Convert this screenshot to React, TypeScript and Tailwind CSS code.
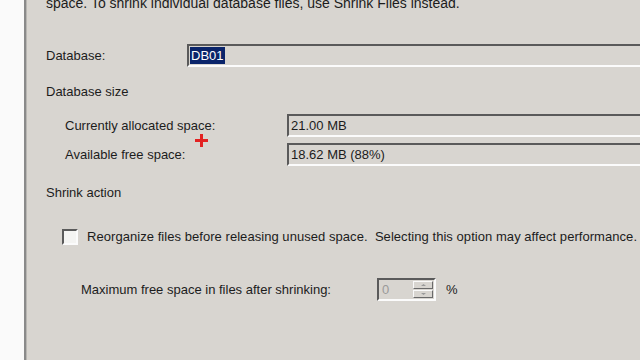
import React from "react";

const sunken =
  "border-t-2 border-l-2 border-b-2 border-r-2 border-t-[#5a5a5a] border-l-[#5a5a5a] border-b-[#fbfbfb] border-r-[#fbfbfb]";

function Field({ children, className = "" }: { children?: React.ReactNode; className?: string }) {
  return (
    <div className={`${sunken} bg-[#d8d5d0] h-[23px] flex items-center pl-[1px] ${className}`}>
      {children}
    </div>
  );
}

function Spinner() {
  return (
    <div className={`${sunken} w-[59px] h-[23px] flex bg-[#d8d5d0]`}>
      <div className="flex-1 pl-[3px] text-[#9a9a9a] leading-[19px]">0</div>
      <div className="w-[21px] flex flex-col gap-[1px] py-[1px] pr-[1px]">
        <div className="flex-1 bg-[#d8d5d0] border-t border-l border-t-[#fafafa] border-l-[#fafafa] border-b border-r border-b-[#6a6a6a] border-r-[#6a6a6a] flex items-center justify-center">
          <svg width="7" height="4" viewBox="0 0 7 4">
            <path d="M1 3 L3.5 1 L6 3 Z" fill="#9a9a9a" />
          </svg>
        </div>
        <div className="flex-1 bg-[#d8d5d0] border-t border-l border-t-[#fafafa] border-l-[#fafafa] border-b border-r border-b-[#6a6a6a] border-r-[#6a6a6a] flex items-center justify-center">
          <svg width="7" height="4" viewBox="0 0 7 4">
            <path d="M1 1 L3.5 3 L6 1 Z" fill="#9a9a9a" />
          </svg>
        </div>
      </div>
    </div>
  );
}

export default function App() {
  return (
    <div
      className="relative w-[640px] h-[360px] overflow-hidden flex bg-[#d8d5d0] text-[13px] text-[#1c1c1c]"
      style={{ fontFamily: '"Liberation Sans", Arial, sans-serif' }}
    >
      <div className="w-[24px] bg-[#fafafa] shrink-0" />
      <div className="w-[3px] bg-[#8a8a8a] border-r border-r-[#b8b6b2] shrink-0" />
      <div className="flex-1 flex flex-col pl-[19px] whitespace-nowrap">
        <div className="h-[15px] leading-[15px] mt-[-4px] text-[14px]">
          space. To shrink individual database files, use Shrink Files instead.
        </div>

        <div className="h-[23px] mt-[33px] flex items-center">
          <span className="w-[141px]">Database:</span>
          <Field className="flex-1 mr-[-20px]">
            <span className="bg-[#0a246a] text-white px-[1px] leading-[17px]">DB01</span>
          </Field>
        </div>

        <div className="h-[15px] leading-[15px] mt-[17px]">Database size</div>

        <div className="h-[23px] mt-[15px] flex items-center pl-[19px]">
          <span className="w-[222px]">Currently allocated space:</span>
          <Field className="flex-1 mr-[-20px]">
            <span className="pl-[1px]">21.00 MB</span>
          </Field>
        </div>

        <div className="h-[23px] mt-[6px] flex items-center pl-[19px]">
          <span className="w-[222px]">Available free space:</span>
          <Field className="flex-1 mr-[-20px]">
            <span className="pl-[1px]">18.62 MB (88%)</span>
          </Field>
        </div>

        <div className="h-[15px] leading-[15px] mt-[19px]">Shrink action</div>

        <div className="h-[16px] mt-[29px] flex items-center pl-[16px]">
          <div className={`w-[16px] h-[16px] ${sunken} bg-[#f4f4f2]`} />
          <span className="ml-[9px] tracking-[0.05px]">
            Reorganize files before releasing unused space.&nbsp; Selecting this option may affect performance.
          </span>
        </div>

        <div className="h-[23px] mt-[33px] flex items-center pl-[35px]">
          <span className="w-[296px]">Maximum free space in files after shrinking:</span>
          <Spinner />
          <span className="ml-[10px]">%</span>
        </div>
      </div>

      <div className="absolute left-[195px] top-[134px] w-[13px] h-[13px] pointer-events-none">
        <div className="absolute left-[5px] top-0 w-[3px] h-[13px] bg-[#e32222]" />
        <div className="absolute left-0 top-[5px] w-[13px] h-[3px] bg-[#e32222]" />
      </div>
    </div>
  );
}
